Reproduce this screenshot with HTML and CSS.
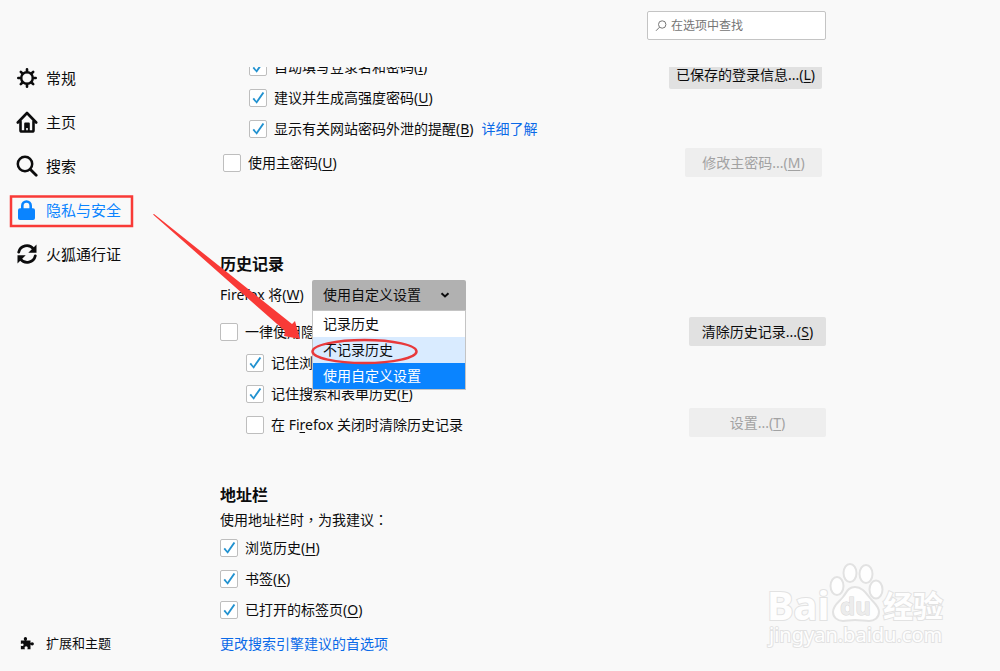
FILE: index.html
```html
<!DOCTYPE html>
<html lang="zh-CN">
<head>
    <meta charset="UTF-8">
    <meta name="viewport" content="width=device-width, initial-scale=1.0">
    <title>选项</title>
    <link rel="stylesheet" href="styles.css">
</head>
<body>
    <div class="page">
        <aside class="sidebar">
            <nav class="categories">
                <a href="#general" class="category">
                    <svg class="icon" viewBox="0 0 20 20" fill="none" stroke="currentColor" stroke-linecap="round">
                        <circle cx="10" cy="10" r="5.8" stroke-width="2.4"/>
                        <path stroke-width="2.6" d="M10 4V1.300M10 16v2.700M4 10H1.300M16 10h2.700M5.500 5.500L3.800 3.800M14.500 5.500L16.200 3.800M5.500 14.500L3.800 16.200M14.500 14.500L16.200 16.200"/>
                    </svg>
                    常规
                </a>
                <a href="#home" class="category">
                    <svg class="icon icon-large" viewBox="0 0 22 22" fill="none" stroke="currentColor" stroke-width="2.600" stroke-linecap="round" stroke-linejoin="round">
                        <path d="M1.800 11.500L11 2l9.200 9.500"/>
                        <path d="M4.500 10.500v8.700q0 1.300 1.300 1.300h10.400q1.300 0 1.300-1.300v-8.700"/>
                        <path fill="currentColor" stroke="none" d="M8.200 21v-8.500q0-1 1-1h3.600q1 0 1 1V21h-2v-4h-1.600v4z"/>
                    </svg>
                    主页
                </a>
                <a href="#search" class="category">
                    <svg class="icon icon-large" viewBox="0 0 22 22" fill="none" stroke="currentColor" stroke-linecap="round">
                        <circle cx="9" cy="9" r="7.200" stroke-width="2.500"/>
                        <path stroke-width="2.800" d="M14.200 14.200l6 6"/>
                    </svg>
                    搜索
                </a>
                <a href="#privacy" class="category selected">
                    <svg class="icon" viewBox="0 0 20 20">
                        <path fill="none" stroke="currentColor" stroke-width="2.600" d="M5.300 9V5.700a4.200 4.200 0 0 1 8.400 0V9"/>
                        <rect x="1" y="8.300" width="17" height="11.700" rx="2" fill="currentColor"/>
                    </svg>
                    隐私与安全
                </a>
                <a href="#sync" class="category">
                    <svg class="icon" viewBox="0 0 20 20">
                        <path fill="none" stroke="currentColor" stroke-width="2.800" stroke-linecap="round" d="M1.700 8.200A8.300 8.300 0 0 1 16.500 5M18.300 11.800A8.300 8.300 0 0 1 3.500 15"/>
                        <path fill="currentColor" d="M19.500 .5v8.200h-8.200zM.5 19.500v-8.200h8.200z"/>
                    </svg>
                    火狐通行证
                </a>
            </nav>
            <a href="#addons" class="addons">
                <svg class="icon icon-small" viewBox="0 0 16 16" fill="currentColor">
                    <path d="M1 5h4.300Q4.300 4 4.300 3a1.900 1.900 0 0 1 3.800 0q0 1-1 2H12v3q1-1 2-1a1.800 1.800 0 0 1 0 3.800q-1 0-2-1V15H8.300q.5-.7.500-1.500a1.800 1.800 0 0 0-3.600 0q0 .8.500 1.500H1v-4.200q.8.700 1.600.7a1.500 1.500 0 0 0 0-3q-.8 0-1.600.700z"/>
                </svg>
                扩展和主题
            </a>
        </aside>

        <main class="main">
            <header class="search-bar">
                <div class="search-box">
                    <svg class="search-icon" viewBox="0 0 12 12" fill="none" stroke="currentColor">
                        <circle cx="7.200" cy="4.500" r="3.700"/>
                        <path d="M4.500 7.200L1 10.800"/>
                    </svg>
                    <input type="text" class="search-input" placeholder="在选项中查找" aria-label="在选项中查找">
                </div>
            </header>

            <div class="scroll-area">
                <section class="logins">
                    <div class="columns">
                        <div class="checks indent">
                            <label class="check"><input type="checkbox" checked><span>自动填写登录名和密码(<u>I</u>)</span></label>
                            <label class="check"><input type="checkbox" checked><span>建议并生成高强度密码(<u>U</u>)</span></label>
                            <div class="check-line">
                                <label class="check"><input type="checkbox" checked><span>显示有关网站密码外泄的提醒(<u>B</u>)</span></label>
                                <a href="#learn-more" class="link">详细了解</a>
                            </div>
                        </div>
                        <button type="button" class="button button-logins">已保存的登录信息...(<u>L</u>)</button>
                    </div>
                    <div class="columns master">
                        <label class="check"><input type="checkbox"><span>使用主密码(<u>U</u>)</span></label>
                        <button type="button" class="button" disabled>修改主密码...(<u>M</u>)</button>
                    </div>
                </section>

                <section class="history">
                    <h2 class="title">历史记录</h2>
                    <div class="mode">
                        <label for="historyMode">Firefox 将(<u>W</u>)</label>
                        <div class="dropdown">
                            <select id="historyMode" class="select">
                                <option>使用自定义设置</option>
                                <option>记录历史</option>
                                <option>不记录历史</option>
                            </select>
                            <svg class="arrow-down" viewBox="0 0 10 10" fill="none" stroke="currentColor" stroke-width="2">
                                <path d="M1.500 3.200L5 6.500l3.500-3.300"/>
                            </svg>
                            <ul class="menu">
                                <li class="menu-item">记录历史</li>
                                <li class="menu-item hover">不记录历史</li>
                                <li class="menu-item active">使用自定义设置</li>
                            </ul>
                        </div>
                    </div>
                    <div class="columns">
                        <div class="checks history-checks">
                            <label class="check"><input type="checkbox"><span>一律使用隐私浏览模式</span></label>
                            <label class="check indent"><input type="checkbox" checked><span>记住浏览和下载历史</span></label>
                            <label class="check indent"><input type="checkbox" checked><span>记住搜索和表单历史(<u>F</u>)</span></label>
                            <label class="check indent"><input type="checkbox"><span>在 Fi<u>r</u>efox 关闭时清除历史记录</span></label>
                        </div>
                        <div class="buttons">
                            <button type="button" class="button">清除历史记录...(<u>S</u>)</button>
                            <button type="button" class="button" disabled>设置...(<u>T</u>)</button>
                        </div>
                    </div>
                </section>

                <section class="address-bar">
                    <h2 class="title">地址栏</h2>
                    <p class="description">使用地址栏时<span class="mark" lang="zh-TW">，</span>为我建议<span class="mark" lang="zh-TW">：</span></p>
                    <div class="checks">
                        <label class="check"><input type="checkbox" checked><span>浏览历史(<u>H</u>)</span></label>
                        <label class="check"><input type="checkbox" checked><span>书签(<u>K</u>)</span></label>
                        <label class="check"><input type="checkbox" checked><span>已打开的标签页(<u>O</u>)</span></label>
                    </div>
                    <a href="#search-suggestions" class="link suggestions">更改搜索引擎建议的首选项</a>
                </section>
            </div>
        </main>
    </div>

    <!-- red marks -->
    <svg class="marks" width="480" height="400" viewBox="0 0 480 400">
        <rect x="11" y="196.500" width="121" height="29.500" fill="none" stroke="#f93a37" stroke-width="2.500"/>
        <path fill="#f93a37" d="M153 214.500L154 214L292 324L295 321L300 339L284 336L285 331z"/>
        <ellipse cx="364.500" cy="351.500" rx="52" ry="11.500" fill="none" stroke="#e8393b" stroke-width="2.500"/>
    </svg>

    <!-- watermark -->
    <svg class="watermark" width="200" height="100" viewBox="0 0 200 100">
        <g fill="#fefefe" stroke="#e2e2e2" stroke-width="2">
            <text class="wm-logo" x="14" y="70">Bai</text>
            <ellipse cx="84" cy="36" rx="6.500" ry="9"/>
            <ellipse cx="97" cy="23" rx="6.500" ry="9"/>
            <ellipse cx="113" cy="24" rx="6.500" ry="9"/>
            <ellipse cx="123" cy="39.500" rx="6.500" ry="9"/>
            <path d="M102 37c7 0 11 6 15 11s9 8 9 14-5 9-10 9c-4 0-9-1-14-1s-8 1-12 1c-6 0-10-4-10-9 0-7 6-10 10-15s5-10 12-10z"/>
            <text class="wm-du" x="87" y="65">du</text>
            <text class="wm-cn" x="130" y="67">经验</text>
            <text class="wm-url" x="16" y="92">jingyan.baidu.com</text>
        </g>
    </svg>
</body>
</html>
```
FILE: styles.css
```css
* {
    margin: 0;
    padding: 0;
    box-sizing: border-box;
}
body {
    position: relative;
    height: 100vh;
    overflow: hidden;
    background: #f9f9f9;
    color: #0c0c0d;
    font-family: "Noto Sans", "Noto Sans CJK SC", sans-serif;
    font-size: 14px;
    line-height: 18px;
}
a {
    text-decoration: none;
}
u {
    text-underline-offset: 2px;
}
.page {
    display: flex;
    height: 100vh;
}

/* sidebar */
.sidebar {
    flex: 0 0 220px;
    display: flex;
    flex-direction: column;
    justify-content: space-between;
    padding: 56px 0 19px 16px;
}
.categories {
    display: flex;
    flex-direction: column;
}
.category,
.addons {
    display: flex;
    align-items: center;
    gap: 8px;
    color: #0c0c0d;
}
.category {
    height: 44px;
    font-size: 15px;
}
.category.selected {
    color: #0a84ff;
}
.addons {
    font-size: 13px;
}
.icon {
    width: 22px;
    height: 20px;
}
.icon-large {
    height: 22px;
}
.icon-small {
    height: 14px;
}

/* content */
.main {
    flex: 1;
    max-width: 606px;
    display: flex;
    flex-direction: column;
}
.search-bar {
    display: flex;
    justify-content: flex-end;
    padding: 11px 0 27px;
}
.search-box {
    display: flex;
    align-items: center;
    gap: 4px;
    width: 179px;
    height: 29px;
    padding: 0 7px;
    background: #fff;
    border: 1px solid #c4c4c4;
    border-radius: 2px;
}
.search-icon {
    flex: none;
    width: 12px;
    height: 12px;
    color: #777;
}
.search-input {
    width: 100%;
    border: none;
    outline: none;
    background: transparent;
    font-family: inherit;
    font-size: 12px;
}
.search-input::placeholder {
    color: #757575;
}
.scroll-area {
    flex: 1;
    min-height: 0;
    overflow: hidden;
}
.columns {
    display: flex;
    justify-content: space-between;
    align-items: flex-start;
}
.checks {
    display: flex;
    flex-direction: column;
    align-items: flex-start;
    gap: 13px;
}
.indent {
    margin-left: 26px;
}
.check {
    display: flex;
    align-items: center;
    gap: 7px;
    white-space: nowrap;
}
.check-line {
    display: flex;
    gap: 8px;
}
.check input {
    appearance: none;
    width: 18px;
    height: 18px;
    background: #fff;
    border: 1px solid #bebebe;
    border-radius: 2px;
}
.check input:checked::before {
    content: "";
    display: block;
    height: 16px;
    background: #2292d0;
    clip-path: polygon(16% 56%, 25% 49%, 40% 68%, 79% 12%, 89% 19%, 42% 86%);
}
.link {
    color: #0a6ae8;
}
.button {
    min-width: 137px;
    height: 29px;
    padding: 0 6px 2px;
    border: none;
    border-radius: 2px;
    background: #e1e1e1;
    color: #0c0c0d;
    font-family: inherit;
    font-size: 14px;
    white-space: nowrap;
}
.button:disabled {
    background: #eee;
    color: #a2a2a2;
}
.title {
    font-size: 16px;
    line-height: 24px;
}

/* the list is scrolled, its first row is cut by the search bar */
.logins {
    margin-top: -9px;
    padding: 0 4px 0 3px;
}
.button-logins {
    margin-top: 2px;
    min-width: 153px;
}
.master {
    align-items: center;
    margin-top: 10px;
}

.history {
    margin-top: 75px;
}
.mode {
    display: grid;
    grid-template-columns: 92px 154px;
    align-items: center;
    margin: 4px 0 7px;
    white-space: nowrap;
}
.dropdown {
    position: relative;
}
.select {
    appearance: none;
    display: block;
    width: 100%;
    height: 30px;
    padding: 0 11px 1px;
    border: none;
    border-radius: 2px 2px 0 0;
    background: #b1b1b1;
    color: #0c0c0d;
    font-family: inherit;
    font-size: 14px;
}
.arrow-down {
    position: absolute;
    top: 10px;
    right: 16px;
    width: 10px;
    height: 10px;
}
.menu {
    position: absolute;
    top: 100%;
    left: 0;
    right: 0;
    z-index: 1;
    list-style: none;
    background: #fff;
    border: 1px solid #c4c4c4;
}
.menu-item {
    padding: 0 10px;
    line-height: 26px;
}
.menu-item.hover {
    background: #d9ebff;
}
.menu-item.active {
    background: #0a84ff;
    color: #fff;
}
.history-checks {
    padding-top: 6px;
}
.buttons {
    display: flex;
    flex-direction: column;
    gap: 62px;
}

.address-bar {
    margin-top: 46px;
}
.description {
    margin: 3px 0 9px;
    line-height: 20px;
}
/* punctuation in the middle of its cell */
.mark {
    font-family: "Noto Sans CJK TC", sans-serif;
    line-height: 1;
}
.suggestions {
    display: inline-block;
    margin-top: 16px;
}

/* overlays */
.marks {
    position: absolute;
    top: 0;
    left: 0;
    z-index: 2;
    pointer-events: none;
}
.watermark {
    position: absolute;
    right: 47px;
    bottom: 21px;
    pointer-events: none;
}
.watermark text {
    font-family: "Noto Sans", "Noto Sans CJK SC", sans-serif;
    font-weight: bold;
    paint-order: stroke;
}
.watermark .wm-logo {
    font-size: 40px;
}
.watermark .wm-du {
    font-size: 24px;
    fill: #ececec;
    stroke: #d8d8d8;
    stroke-width: 1px;
}
.watermark .wm-cn {
    font-size: 30px;
}
.watermark .wm-url {
    font-size: 20px;
    font-weight: normal;
}
```
